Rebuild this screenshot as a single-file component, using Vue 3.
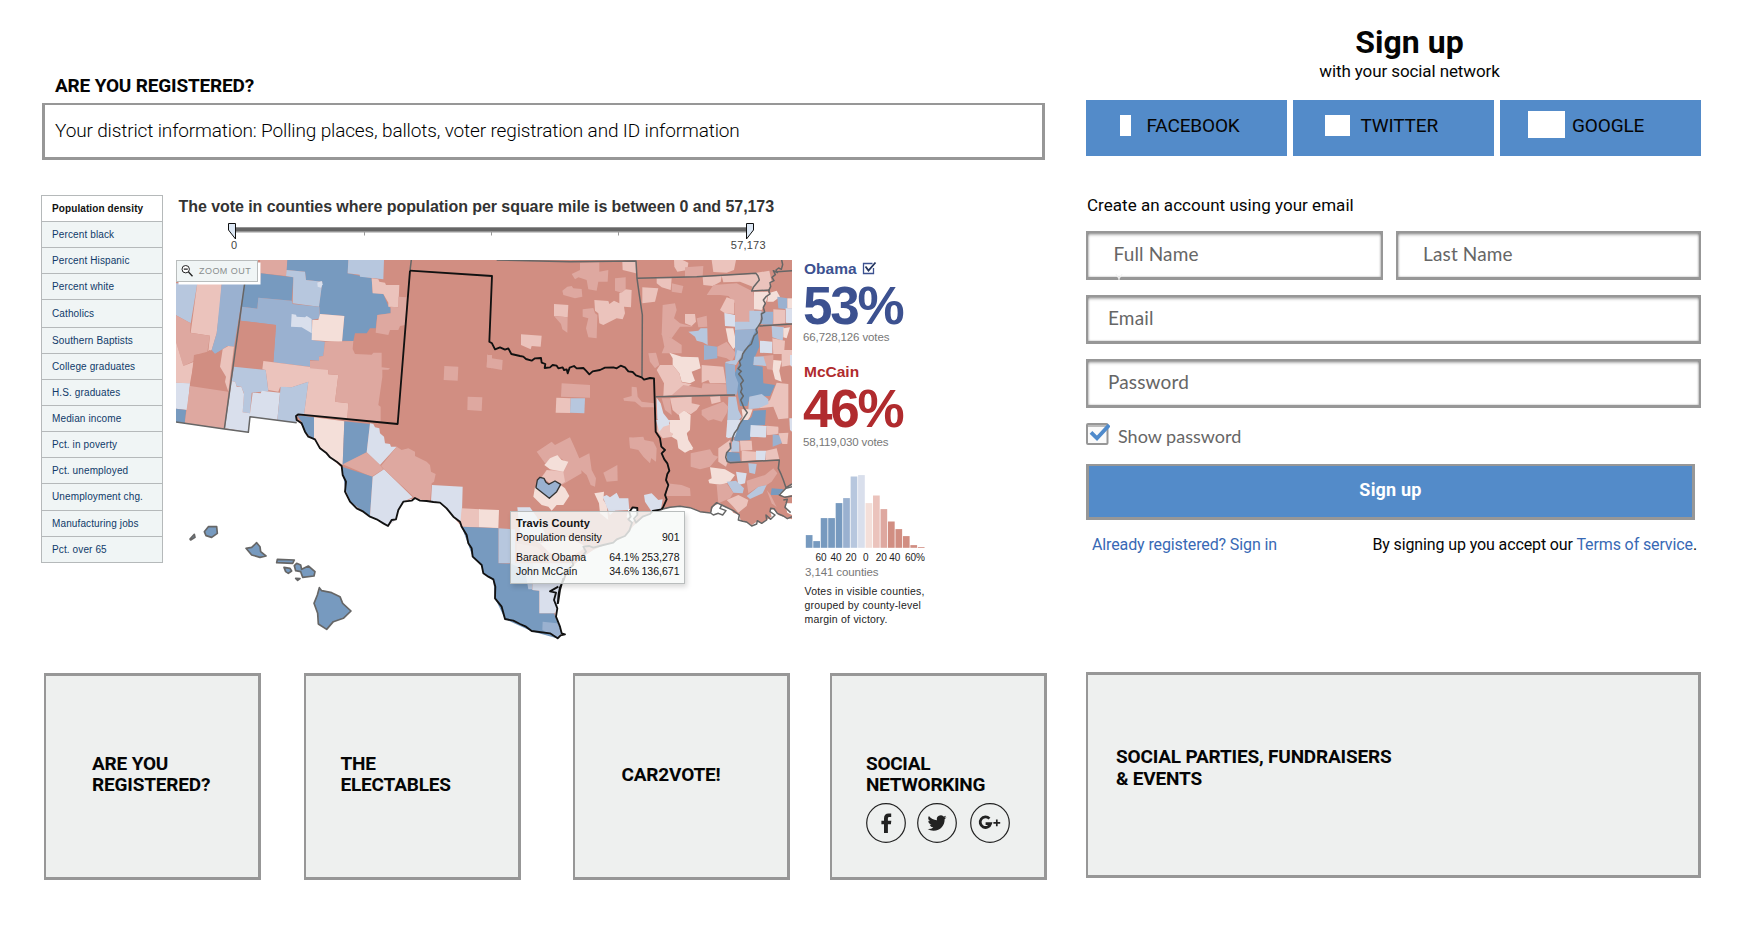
<script setup>
const menu = [
  'Population density', 'Percent black', 'Percent Hispanic', 'Percent white', 'Catholics',
  'Southern Baptists', 'College graduates', 'H.S. graduates', 'Median income', 'Pct. in poverty',
  'Pct. unemployed', 'Unemployment chg.', 'Manufacturing jobs', 'Pct. over 65',
]

// r1 (strong) to r4 (slight) lean McCain, b1 (strong) to b4 (slight) lean Obama
const bars = [
  [12.7, 'b1'], [6.7, 'b1'], [29.7, 'b1'], [29.7, 'b1'], [44.7, 'b1'], [49.7, 'b2'], [71.3, 'b3'], [72.7, 'b4'],
  [44.7, 'r4'], [52.3, 'r3'], [38.7, 'r2'], [26.3, 'r1'], [18.7, 'r1'], [11.7, 'r1'], [2.7, 'r1'], [0.8, 'r1'],
]
const axis = [
  [821, '60'], [836, '40'], [851, '20'], [865.8, '0'], [881.2, '20'], [894.8, '40'], [915, '60%'],
]

const west = [
  ['b3', '18,100 82,100 62,220 18,196'],
  ['r3', '82,100 155,100 150,170 140,250 125,300 115,303 120,257 62,248'],
  ['b2', '155,100 224,100 192,290 172,288 158,298 135,312 125,300 140,250'],
  ['r2', '18,196 62,220 60,248 120,257 112,305 75,315 72,333 40,348 18,275'],
  ['r3', '18,275 40,348 72,335 60,400 18,398'],
  ['r1', '72,315 112,310 118,300 135,312 158,298 150,350 168,390 172,425 62,410'],
  ['r3', '158,298 175,288 192,290 175,425 165,395 168,380 150,350'],
  ['b4', '18,398 60,400 52,480 18,476'],
  ['b1', '18,476 48,480 45,520 18,516'],
  ['r2', '60,408 175,425 163,537 44,520'],
  ['r2', '270,30 352,30 350,78 272,70'],
  ['b1', '352,30 535,30 533,70 605,85 608,128 640,132 655,168 662,175 662,190 622,195 617,235 600,235 590,250 555,250 550,273 516,272 523,198 450,192 447,165 457,95 408,90 405,65 350,60'],
  ['b3', '535,30 642,30 640,88 570,80 569,74 533,70'],
  ['b1', '272,70 370,82 365,152 265,143 262,176 215,170 224,100 270,100'],
  ['b3', '350,60 405,65 408,90 457,95 447,170 368,160 370,82 348,78'],
  ['b4', '442,98 455,93 458,103 453,113 443,110'],
  ['b2', '215,170 262,176 265,143 365,152 368,162 448,170 450,205 425,210 427,270 465,275 460,318 447,320 447,332 420,330 420,350 310,337 318,225 212,212'],
  ['b4', '365,192 378,194 380,200 405,202 410,198 425,207 425,250 395,232 363,230'],
  ['r4', '450,192 523,198 516,277 425,270 427,210 445,210'],
  ['r1', '212,212 318,225 310,337 280,333 277,358 192,348'],
  ['r3', '280,333 475,358 475,373 505,375 495,455 535,460 532,507 402,495 415,395 365,412 330,412 325,425 295,420 287,360 277,358'],
  ['r2', '465,275 550,273 548,297 555,312 605,314 610,308 635,308 635,352 660,355 655,359 637,359 637,380 625,465 632,470 632,515 532,507 535,460 495,455 505,375 475,373 475,360 420,355 420,332 447,332 447,320 460,318'],
  ['b3', '192,350 287,360 295,423 245,428 240,490 218,487 222,430 214,410 200,408 196,396 185,393'],
  ['b4', '185,393 196,396 200,410 214,410 222,432 218,487 240,490 248,428 272,430 275,422 330,428 322,510 240,500 235,547 165,535'],
  ['b3', '332,410 365,412 415,395 402,495 380,495 380,518 322,510'],
  ['r3', '605,85 625,88 628,95 645,98 648,105 688,105 685,172 655,170 655,158 640,132 608,130'],
  ['r2', '685,140 710,142 706,225 690,228 685,240 660,240 655,255 617,248 622,195 662,190 662,170 685,172'],
  ['b1', '380,495 432,502 432,570 405,545 395,515'],
  ['r4', '432,502 523,514 518,645 480,625 432,570'],
  ['b1', '523,514 600,522 590,607 518,645'],
  ['r2', '823,348 865,350 863,392 821,390'],
  ['r2', '893,440 937,442 935,483 892,480'],
  ['r2', '952,315 966,315 966,355 950,352'],
]

const south = [
  ['b4', '270,10 280,12 285,22 298,25 300,40 312,50 315,70 330,72 333,80 350,80 300,135 260,97'],
  ['r2', '188,133 260,97 300,135 310,148 275,170'],
  ['b1', '186,140 278,170 270,288 210,245 195,205'],
  ['b4', '278,170 312,148 398,232 370,245 355,270 348,298 324,318 270,288'],
  ['r2', '350,80 365,90 385,85 405,95 405,108 440,125 450,135 453,155 467,162 462,185 455,190 450,245 405,234 312,148 303,138'],
  ['b4', '456,195 548,200 545,312 520,290 480,248 453,243'],
  ['r3', '545,265 600,268 597,322 540,320'],
  ['r4', '597,268 657,270 655,324 597,322'],
  ['b3', '655,325 705,328 705,430 655,430'],
  ['b1', '545,320 655,325 655,430 730,432 757,510 778,512 778,580 822,580 845,640 830,655 755,634 675,597 645,535 640,478 610,460 605,435 578,410'],
  ['b3', '690,430 762,430 757,508 745,508 735,450'],
  ['b4', '760,430 880,430 858,470 842,505 834,556 824,580 778,580 778,512 757,510'],
  ['b2', '788,605 832,610 845,640 830,655 787,630'],
]

const plains = [
  ['r2', '300,38 358,37 358,65 385,60 383,95 355,95 350,122 325,118 320,90 295,82 285,88 275,72 300,60'],
  ['r2', '247,122 262,110 275,108 280,115 305,117 307,140 285,145 250,135'],
  ['r3', '222,162 265,165 263,202 222,198'],
  ['r2', '222,198 263,202 262,248 247,238 243,222'],
  ['r2', '308,178 340,174 345,190 352,195 350,265 325,262 318,235 325,205 308,200'],
  ['r3', '343,150 385,153 388,162 402,152 418,160 418,130 437,118 455,120 453,172 432,170 435,190 428,208 410,205 370,225 358,220 355,190 345,182'],
  ['r2', '405,85 437,82 437,118 425,128 405,122'],
  ['r3', '427,35 468,35 468,70 428,60'],
  ['r3', '123,253 185,257 182,290 155,288 152,298 123,285'],
  ['r2', '22,313 35,325 68,330 66,360 20,352'],
  ['r2', '245,400 330,405 330,443 243,440'],
  ['r3', '229,443 272,445 270,489 227,488'],
  ['b3', '272,445 315,445 313,490 270,488'],
  ['r2', '430,445 455,438 455,410 470,412 473,440 485,455 522,460 522,472 485,472 465,455 432,452'],
  ['r2', '448,563 490,560 495,575 520,580 522,590 510,640 490,620 475,600 450,595'],
  ['r3', '582,30 608,30 625,38 622,60 592,65 583,50'],
  ['r2', '615,52 670,48 668,78 615,82'],
  ['r3', '695,30 768,30 762,60 740,68 700,66'],
  ['r3', '487,112 535,115 525,155 487,160'],
  ['r3', '530,85 575,85 572,120 545,112 530,100'],
  ['r2', '575,100 610,108 605,130 575,125'],
  ['r3', '668,80 725,78 722,95 698,108 670,105'],
  ['r3', '725,77 828,71 838,88 818,110 780,95 730,97'],
  ['r3', '820,70 868,62 875,95 865,122 815,123'],
  ['r2', '700,105 770,100 820,125 825,165 822,185 808,215 785,218 765,215 765,160 745,138 720,135 680,135'],
  ['r2', '548,165 585,160 590,180 582,205 600,220 640,230 600,230 575,265 545,255'],
  ['r2', '545,250 575,265 605,285 605,310 545,310 553,290'],
  ['r3', '615,192 645,192 648,215 635,228 615,220'],
  ['r2', '650,205 680,197 682,230 655,232'],
  ['b3', '625,245 655,242 662,235 682,235 683,285 668,277 650,272 645,260'],
  ['b2', '672,285 712,290 712,325 672,330'],
  ['r2', '712,290 740,275 768,310 755,335 740,325 712,318'],
  ['r4', '737,235 760,235 770,285 760,298 745,275'],
  ['b4', '733,188 765,195 765,230 735,228'],
  ['r3', '720,180 740,142 763,150 763,192 735,190'],
  ['b3', '765,215 808,215 808,182 845,182 840,215 832,238 765,240'],
  ['b2', '765,240 832,236 815,270 800,300 780,330 765,335'],
  ['b3', '772,300 790,305 768,345 735,340 738,335 765,330'],
  ['b1', '832,230 838,290 825,320 820,345 848,350 850,400 885,405 870,438 810,440 802,468 780,468 768,400 762,375 785,322 810,275'],
  ['b2', '735,340 765,345 765,375 775,400 770,434 740,432'],
  ['b3', '745,440 768,440 775,480 785,500 765,525 742,515'],
  ['r4', '568,308 605,320 655,322 662,355 635,365 645,392 630,400 605,395 598,370 578,345 578,325'],
  ['r3', '540,345 578,345 598,370 605,397 635,403 605,420 580,435 550,438 552,400 530,360'],
  ['r2', '505,310 528,308 538,345 525,355 510,335'],
  ['r3', '665,345 730,350 738,400 690,400 685,390 665,398'],
  ['r2', '575,436 610,405 665,415 668,400 738,403 740,432'],
  ['r4', '822,125 865,125 860,150 845,180 822,178'],
  ['r4', '865,130 890,122 900,140 880,155 862,155'],
  ['b2', '892,140 922,145 922,178 895,175'],
  ['r4', '922,145 936,145 936,175 922,175'],
  ['b2', '845,185 880,185 878,225 840,222'],
  ['r3', '880,178 915,180 915,220 880,222'],
  ['b4', '917,175 936,175 936,220 917,218'],
  ['b3', '875,228 912,232 908,272 877,262'],
  ['r4', '910,235 930,232 920,265 910,262'],
  ['b4', '840,272 877,275 877,310 840,308'],
  ['r3', '877,265 915,272 912,312 880,312'],
  ['b3', '822,320 860,318 860,348 820,345'],
  ['r3', '905,300 936,300 936,345 905,350'],
  ['r2', '850,318 880,315 880,360 862,358'],
  ['r4', '880,330 905,332 898,362 905,395 885,388 878,360'],
  ['b4', '930,315 936,315 936,350 930,345'],
  ['r3', '890,398 925,402 925,505 895,508 880,470 835,475 870,450'],
  ['b3', '808,440 845,432 865,448 865,462 835,475 805,478'],
  ['b1', '820,482 858,480 855,525 812,530 808,570 762,572 765,540 795,520 815,500'],
  ['r4', '785,478 818,478 810,500 795,522 780,520 788,500'],
  ['b4', '812,528 858,530 857,562 810,560'],
  ['b4', '928,505 936,505 936,545 930,540'],
  ['r3', '860,527 895,530 895,550 865,555'],
  ['b4', '530,443 542,460 550,490 570,515 545,520 532,508'],
  ['r3', '532,520 550,512 575,525 577,560 548,565 532,545'],
  ['r4', '595,485 615,482 632,495 630,540 620,550 625,575 638,600 610,600 600,575 575,560 580,545 597,540 600,510'],
  ['r3', '570,445 635,440 635,460 660,465 650,480 632,493 612,482 595,495 578,480'],
  ['r2', '545,445 570,445 575,495 555,480'],
  ['r2', '665,480 690,470 730,455 745,470 740,490 725,515 700,508 685,512 665,495'],
  ['r3', '690,440 720,438 722,455 695,462'],
  ['b4', '742,510 770,515 765,545 750,562 738,562'],
]

const gulf = [
  ['b4', '468,0 510,0 507,15 490,20 478,35'],
  ['r4', '510,0 555,0 555,20 565,60 580,85 555,98 535,85 530,50 510,35'],
  ['r2', '572,100 630,88 640,105 655,110 630,140 600,148 572,140'],
  ['r3', '655,85 690,60 695,95 678,140 655,125'],
  ['r4', '630,142 675,148 705,165 690,185 665,195 628,190 625,180 635,175'],
  ['b4', '685,0 722,0 705,50 682,55'],
  ['b3', '697,60 718,65 718,95 693,95'],
  ['b1', '727,0 765,0 750,60 706,62 715,25'],
  ['b1', '680,95 718,98 722,125 682,125'],
  ['b4', '752,15 800,18 798,52 750,50'],
  ['b2', '818,43 850,48 845,70 818,80'],
  ['r3', '800,20 835,25 833,42 800,45'],
  ['r3', '720,62 755,62 757,90 722,92'],
  ['r3', '835,40 865,38 862,72 847,72'],
  ['b4', '768,92 798,92 796,120 768,120'],
  ['r3', '725,92 768,95 768,120 725,124'],
  ['r3', '798,92 830,85 838,118 798,120'],
  ['b3', '745,130 770,132 765,162 748,158'],
  ['b4', '708,155 740,160 735,190 715,195'],
  ['b3', '680,185 708,182 732,205 728,220 700,218'],
  ['r2', '740,182 795,165 820,145 832,160 815,185 800,195 775,200 745,220'],
  ['b3', '740,228 775,200 800,195 788,220 750,237'],
  ['b1', '815,205 850,208 845,225 812,225'],
  ['r2', '800,210 812,225 830,262 815,250'],
  ['r2', '650,195 680,190 700,218 690,235 655,250'],
  ['r3', '680,240 715,225 745,240 740,258 715,278 700,260'],
  ['r2', '500,190 545,195 570,205 572,228 500,228'],
  ['r2', '388,52 460,65 470,85 468,125 450,112 430,105 425,90 390,82'],
  ['r2', '310,158 352,135 353,182 320,185'],
  ['r2', '228,120 268,100 275,150 288,175 285,200 272,195 260,165 240,148'],
  ['r2', '110,95 155,65 165,75 210,52 225,85 240,120 245,160 185,195 150,150 202,130 170,105 135,130'],
  ['r3', '125,172 140,150 190,155 195,185 180,195 150,190'],
  ['r4', '133,135 150,115 172,105 185,120 205,125 190,155 150,148'],
  ['r4', '105,200 148,235 182,195 195,205 208,228 190,255 170,255 155,272 145,260 125,255 100,230'],
  ['r4', '283,220 312,215 310,240 320,255 325,300 300,280 297,250'],
  ['b4', '308,230 320,225 330,232 350,218 358,235 385,235 388,270 345,272 330,285 318,255'],
  ['b4', '432,225 455,220 475,240 488,238 483,268 455,275 435,245'],
  ['b4', '52,262 90,262 110,290 135,340 120,370 60,340'],
  ['r2', '50,370 110,380 130,400 50,430'],
  ['r4', '120,370 200,350 260,380 200,420 150,400'],
]

const islands = [
  '118,503 125,512 155,518 180,530 188,550 213,573 190,595 160,605 140,628 115,612 113,580 102,550 112,525',
  '50,430 62,435 65,448 85,438 105,455 102,468 68,472 62,455 47,452 43,437',
  '12,442 30,445 35,453 25,460 17,455',
  '47,475 60,476 53,481',
  '-8,418 43,420 38,430 -10,428',
  '-102,385 -85,382 -70,368 -60,380 -58,395 -42,408 -60,412 -85,405',
  '-227,335 -215,320 -190,320 -188,340 -205,352 -222,347',
  '-270,357 -257,343 -255,352 -268,360',
]

const land =
  'M18,30 H1866 V808 L1840,800 1825,795 1810,778 1800,780 1805,800 1790,810 1775,820 1760,815 1745,826 1730,818 1712,812 1708,795 1690,788 1680,775 1665,772 1650,760 1630,768 1622,788 1590,785 1560,772 1530,768 1500,772 1475,778 1450,785 1420,802 1390,828 1370,855 1340,872 1310,882 1270,900 1240,920 1205,950 1180,985 1165,1025 1162,1062 1152,1045 1158,1110 1175,1153 1162,1165 1140,1150 1085,1143 1050,1122 1005,1107 995,1070 975,1045 970,988 940,970 935,945 908,920 895,880 875,830 850,800 810,758 770,753 735,744 700,755 685,780 678,808 654,828 620,808 580,785 540,755 525,715 518,655 480,622 450,595 430,565 410,555 395,525 380,510 380,518 240,500 235,547 163,537 18,516 Z'

const rioGrande =
  'M720,62 L966,78 958,275 966,280 975,298 990,292 1005,299 1015,295 1024,312 1050,318 1060,320 1068,327 1085,332 1095,325 1113,324 1115,338 1126,342 1124,354 1140,352 1148,345 1160,347 1165,355 1178,352 1182,360 1190,358 1193,370 1199,353 1212,348 1220,355 1240,354 1248,362 1258,373 1268,364 1290,360 1305,353 1330,352 1340,355 1352,347 1365,352 1375,364 1388,366 1398,376 1415,382 1422,389 1440,384 1452,385 1457,545 1470,565 1474,590 1485,600 1475,610 1483,628 1492,640 1498,662 1492,672 1488,690 1495,705 1485,735 1490,748 1480,770 1475,778'
const coast =
  'M1475,778 L1448,783 1440,792 1418,800 1398,818 1392,806 1402,795 1402,774 1388,772 1378,786 1382,800 1375,808 1386,818 1378,842 1365,858 1340,868 1330,878 1300,885 1270,893 1258,888 1240,890 1248,905 1236,920 1205,930 1210,945 1190,962 1182,988 1170,1012 1166,1030 1163,1062 M1180,985 L1170,1020 1164,1060 M1165,1010 L1140,1024 1158,1028 1152,1050 1162,1075 1158,1100 1170,1130 1175,1150 1185,1153 1172,1156 1163,1165 1140,1150 1085,1143 1068,1130 1050,1122 1030,1112 1005,1107 995,1070 975,1045 976,1010 970,988 955,980 940,970 935,945 908,920 905,895 895,880 890,855 875,830 870,815 850,800 830,775 810,758 790,756 770,753 750,752 735,744 725,752 700,755 685,780 678,808 665,810 654,828 640,820 620,808 600,800 580,785 560,775 540,755 525,725 528,695 518,675 515,648 500,635 480,622 470,610 450,595 435,568 415,560 405,545 395,520 380,510 378,498 385,493 683,522 720,62'
</script>

<template>
  <div class="page">
    <main class="left">
      <h2 class="lead">ARE YOU REGISTERED?</h2>
      <div class="district"><span>Your district information: Polling places, ballots, voter registration and ID information</span></div>

      <section class="viz">
        <ul class="menu">
          <li v-for="(m, i) in menu" :key="m" :class="['item', 'm' + i]"><span>{{ m }}</span></li>
        </ul>

        <div class="center">
          <h3 class="viz-title">The vote in counties where population per square mile is between 0 and 57,173</h3>
          <svg class="slider" viewBox="176 219 616 41">
            <rect x="234" y="227.3" width="514" height="4.4" fill="#666" />
            <path d="M236,232H747" stroke="#999" />
            <path d="M364.5,232v3.5M491.5,232v3.5M618.5,232v3.5" stroke="#999" />
            <path d="M228.5,223.5h7v15.5l-7,-9z" fill="#dde8f5" stroke="#111" />
            <path d="M753.5,223.5h-7v15.5l7,-9z" fill="#dde8f5" stroke="#111" />
            <text x="234" y="249" text-anchor="middle">0</text>
            <text x="748.3" y="249" text-anchor="middle" class="max">57,173</text>
          </svg>
          <div class="map-wrap">
            <svg class="map" viewBox="18 30 1848 1155">
              <path :d="land" class="r1" />
              <g><polygon v-for="(p, i) in west" :key="i" :class="p[0]" :points="p[1]" /></g>
              <g transform="translate(330 510)"><polygon v-for="(p, i) in south" :key="i" :class="p[0]" :points="p[1]" /></g>
              <g transform="translate(930 0)"><polygon v-for="(p, i) in plains" :key="i" :class="p[0]" :points="p[1]" /></g>
              <g transform="translate(990 510)"><polygon v-for="(p, i) in gulf" :key="i" :class="p[0]" :points="p[1]" /></g>
              <g transform="translate(990 510)" class="water">
                <polygon points="385,268 410,262 412,290 395,308 380,290" />
                <polygon points="640,262 665,255 678,270 660,285 642,278" />
                <polygon points="858,205 876,195 876,225 850,230 838,222" />
                <polygon points="855,250 876,250 876,285 862,278" />
              </g>
              <g class="state">
                <path d="M224,100 L163,537 M18,516 L163,537 235,547 240,500 380,518 M724,30 L720,62" />
                <g transform="translate(930 0)">
                  <path d="M50,30 L270,35 468,33 471,85 478,135 487,195 486,380 M471,85 L650,80 828,70 834,78 838,90 828,102 820,112 815,123 870,120 M890,65 L936,62 M838,228 L936,222 M527,440 L765,435" />
                  <path d="M905,30 l3,14 -4,14 -8,-4 -8,6 4,8 -12,-6 6,12 -10,8 6,10 -12,6 2,12 -6,12 4,10 -12,8 -8,10 6,10 -6,12 4,14 -10,6 2,14 -4,12 -8,12 -6,8 4,10 -10,10 -4,12 -4,12 -10,8 -8,10 -8,12 -2,12 -8,10 4,12 -8,10 10,8 -8,8 8,10 6,10 -8,10 4,14 -4,10 8,12 -8,12 6,14 4,10 10,14 -8,12 -8,12 -8,12 -6,14 -8,10 -6,14 -2,12" />
                </g>
                <g transform="translate(990 510)">
                  <path d="M690,68 L692,85 680,98 677,112 682,125 690,128 838,120 835,145 842,160 850,180 858,203 876,192" />
                  <path d="M485,268 L510,262 540,259 570,263 600,275 632,279 635,262 650,248 665,255 660,265 678,272 668,285 655,280 640,285 632,279 M665,255 L700,272 718,285 715,300 728,304 740,306 755,318 770,312 772,302 785,310 800,300 798,285 812,298 825,285 810,275 812,265 822,266 832,280 850,288 862,296 876,290 M876,200 L858,205 838,225 855,232 876,228 M850,240 L862,238 855,262 872,278" />
                </g>
              </g>
              <path :d="rioGrande" class="texas" />
              <path :d="coast" class="texas" />
              <g transform="translate(330 510)" class="island"><polygon v-for="p in islands" :key="p" :points="p" /></g>
              <polygon class="travis" transform="translate(990 510)" points="112,180 120,172 132,175 138,187 146,193 165,183 182,193 170,215 148,235 108,203" />
            </svg>

            <div class="zoom-out">
              <svg width="12" height="12" viewBox="0 0 12 12"><circle cx="4.7" cy="4.2" r="3.7" fill="#fff" stroke="#222" /><path d="M2.8,4.2h4M7.5,7l4,4.2" stroke="#222" stroke-width="1.3" fill="none" /></svg>
              <span>ZOOM OUT</span>
            </div>

            <div class="tip">
              <strong>Travis County</strong>
              <div class="tip-row"><span>Population density</span><span>901</span></div>
              <div class="tip-row cand"><span>Barack Obama</span><span class="pct">64.1%</span><span class="cnt">253,278</span></div>
              <div class="tip-row"><span>John McCain</span><span class="pct">34.6%</span><span class="cnt">136,671</span></div>
            </div>
          </div>
        </div>

        <aside class="stats">
          <div class="name obama">Obama
            <svg width="15" height="14" viewBox="0 0 15 14"><path d="M10.5,2.5H1.5v10h10V7" fill="#fff" stroke="#3c5190" stroke-width="1.3" /><path d="M3.5,5.5l3,4L13.5,1.5" fill="none" stroke="#24355f" stroke-width="1.8" /></svg>
          </div>
          <div class="big obama">53%</div>
          <div class="votes">66,728,126 votes</div>
          <div class="name mccain">McCain</div>
          <div class="big mccain">46%</div>
          <div class="votes v2">58,119,030 votes</div>
          <svg class="histo" viewBox="803 475 124 90">
            <rect v-for="(b, i) in bars" :key="i" :class="b[1]" :x="805.8 + i * 7.47" :y="547.8 - b[0]" width="6.7" :height="b[0]" />
            <text v-for="a in axis" :key="a[0]" :x="a[0]" y="561" text-anchor="middle">{{ a[1] }}</text>
          </svg>
          <div class="counties">3,141 counties</div>
          <p class="note">Votes in visible counties,<br />grouped by county-level<br />margin of victory.</p>
        </aside>
      </section>

      <section class="cards">
        <div class="card c1">ARE YOU<br />REGISTERED?</div>
        <div class="card c2">THE<br />ELECTABLES</div>
        <div class="card c3">CAR2VOTE!</div>
        <div class="card c4">
          <div>SOCIAL<br />NETWORKING</div>
          <div class="icons">
            <svg viewBox="0 0 40 40"><circle cx="20" cy="20" r="19.3" /><path class="ink" d="M18,30V21.2h-2.6v-3.4H18v-2.3c0,-3.2 1.7,-5 4.6,-5h2.6v3.6h-1.7c-1.3,0 -1.6,.6 -1.6,1.7v2h3.4l-.4,3.4h-3V30z" /></svg>
            <svg viewBox="0 0 40 40"><circle cx="20" cy="20" r="19.3" /><path class="ink" transform="translate(10.6 10.6) scale(.79)" d="M23.95 4.57a10 10 0 0 1-2.82.77 4.96 4.96 0 0 0 2.16-2.72 9.9 9.9 0 0 1-3.12 1.19 4.92 4.92 0 0 0-8.38 4.48A13.93 13.93 0 0 1 1.64 3.16a4.92 4.92 0 0 0 1.52 6.57 4.9 4.9 0 0 1-2.23-.61v.06a4.92 4.92 0 0 0 3.95 4.83 5 5 0 0 1-2.21.08 4.94 4.94 0 0 0 4.6 3.42A9.87 9.87 0 0 1 0 19.54a13.99 13.99 0 0 0 7.55 2.21c9.05 0 14-7.5 14-13.98 0-.21 0-.42-.02-.63a9.94 9.94 0 0 0 2.46-2.55z" /></svg>
            <svg viewBox="0 0 40 40"><circle cx="20" cy="20" r="19.3" /><path class="line" d="M19.4,15.6A5.3,5.3 0 1 0 20.6,20.6H15.6" /><path class="thin" d="M23.4,19.9h6.8M26.8,16.5v6.8" /></svg>
          </div>
        </div>
      </section>
    </main>

    <aside class="right">
      <h1>Sign up</h1>
      <p class="sub">with your social network</p>
      <div class="socials">
        <button class="soc"><i class="fb"></i><span>FACEBOOK</span></button>
        <button class="soc"><i class="tw"></i><span>TWITTER</span></button>
        <button class="soc"><i class="gg"></i><span>GOOGLE</span></button>
      </div>
      <p class="create">Create an account using your email</p>
      <div class="names">
        <div class="field full"><span>Full Name</span>
          <svg class="notch" width="8" height="6" viewBox="0 0 8 6"><path d="M.8,0 4,4.5 7.2,0M4,4.5V6" fill="none" stroke="#f4f4f4" stroke-width="1.1" /></svg>
        </div>
        <div class="field last"><span>Last Name</span></div>
      </div>
      <div class="field"><span>Email</span></div>
      <div class="field"><span>Password</span></div>
      <div class="show">
        <svg width="24" height="22" viewBox="0 0 24 22">
          <rect x="1" y="1" width="20.5" height="20" rx="1" fill="#fafafa" stroke="#979797" stroke-width="2" />
          <path d="M2,3H21" stroke="#bbb" stroke-width="2" />
          <path d="M5,9.3l6,6L23.2,2" fill="none" stroke="#4f8acb" stroke-width="3.8" />
        </svg>
        <span>Show password</span>
      </div>
      <button class="submit">Sign up</button>
      <div class="links">
        <a class="signin">Already registered? Sign in</a>
        <span class="terms">By signing up you accept our <a>Terms of service</a>.</span>
      </div>
      <div class="events">SOCIAL PARTIES, FUNDRAISERS<br />&amp; EVENTS</div>
    </aside>
  </div>
</template>

<style>
body {
  margin: 0;
  background: #fff;
  overflow: hidden;
}
</style>

<style scoped>
.page {
  display: flex;
  width: 1755px;
  height: 939px;
  box-sizing: border-box;
  padding-left: 42px;
  font-family: Roboto, sans-serif;
  color: #050505;
}
.page * {
  box-sizing: border-box;
}
h1, h2, h3, p, ul {
  margin: 0;
  padding: 0;
}
button {
  border: 0;
  padding: 0;
  font-family: inherit;
}
.left {
  width: 1005px;
  padding-top: 73px;
}
.right {
  width: 615px;
  margin-left: 39px;
  padding-top: 24px;
}
.lead {
  padding-left: 13px;
  font-size: 19px;
  line-height: 25px;
  font-weight: 700;
  letter-spacing: -0.18px;
  white-space: nowrap;
}
.district {
  width: 1003px;
  height: 57px;
  margin-top: 5px;
  padding-left: 10px;
  border: 3px solid #979797;
  border-top-width: 2px;
  font-size: 19px;
  line-height: 52px;
  font-weight: 300;
  letter-spacing: -0.14px;
  color: #000;
  white-space: nowrap;
}
.viz {
  display: flex;
  height: 450px;
  margin-top: 35px;
  font-family: 'Liberation Sans', Arial, sans-serif;
}
.menu {
  width: 122px;
  margin-left: -1px;
  list-style: none;
}
.item {
  height: 26.05px;
  padding-left: 10px;
  border: 1px solid #b5b9ba;
  border-bottom-width: 0;
  background: #f0f5f5;
  color: #0f3a69;
  font-size: 10px;
  line-height: 25px;
  letter-spacing: 0.12px;
  white-space: nowrap;
}
.item.m0 {
  background: #fff;
  color: #111;
  font-weight: 700;
  letter-spacing: 0.1px;
}
.item.m4 {
  height: 28px;
  line-height: 27px;
}
.item.m13 {
  height: 27.5px;
  border-bottom-width: 1px;
}
.center {
  width: 616px;
  margin-left: 13px;
}
.viz-title {
  height: 24px;
  padding-left: 2.5px;
  font-size: 16px;
  line-height: 23px;
  letter-spacing: -0.06px;
  color: #333;
  white-space: nowrap;
}
.slider {
  display: block;
  width: 616px;
  height: 41px;
}
.slider text {
  font-size: 11px;
  fill: #444;
}
.slider .max {
  letter-spacing: 0.2px;
}
.map-wrap {
  position: relative;
  width: 616px;
  height: 385px;
}
.map {
  display: block;
  width: 616px;
  height: 385px;
}
.r1 { fill: #d18e82; }
.r2 { fill: #dea8a0; }
.r3 { fill: #ebc3bc; }
.r4 { fill: #f4dfd9; }
.b1 { fill: #779abf; }
.b2 { fill: #9ab1d0; }
.b3 { fill: #b7c7de; }
.b4 { fill: #d9dfec; }
.water { fill: #fff; }
.state {
  fill: none;
  stroke: #666;
  stroke-width: 4.5;
  stroke-linejoin: round;
}
.texas {
  fill: none;
  stroke: #111;
  stroke-width: 5.5;
  stroke-linejoin: round;
}
.island {
  fill: #779abf;
  stroke: #666;
  stroke-width: 5;
  stroke-linejoin: round;
}
.travis {
  fill: #9ab1d0;
  stroke: #333;
  stroke-width: 4;
  stroke-linejoin: round;
}
.zoom-out {
  position: absolute;
  left: 0;
  top: 0;
  display: flex;
  align-items: center;
  width: 82px;
  height: 22px;
  padding-left: 4px;
  background: #f0f5f5;
  border: 1px solid #b9bdbd;
  box-shadow: 2.5px 2.5px 0 #fff;
  font-size: 9px;
  color: #8a8e8e;
}
.zoom-out span {
  margin-left: 6px;
  letter-spacing: 0.45px;
  white-space: nowrap;
}
.tip {
  position: absolute;
  left: 334px;
  top: 251px;
  width: 175px;
  height: 73px;
  padding: 4px 4.5px 0 5px;
  background: rgba(247, 249, 248, 0.84);
  border: 1px solid #b9bdbd;
  box-shadow: 2px 3px 5px rgba(0, 0, 0, 0.15);
  font-size: 10.5px;
  line-height: 14px;
  color: #111;
  white-space: nowrap;
}
.tip strong {
  display: block;
  font-size: 11px;
  letter-spacing: 0.1px;
}
.tip-row {
  display: flex;
  justify-content: space-between;
}
.cand {
  margin-top: 6px;
}
.pct {
  margin-left: auto;
}
.cnt {
  width: 40.5px;
  text-align: right;
}
.stats {
  width: 130px;
  margin-left: 11px;
  padding-top: 65px;
  white-space: nowrap;
}
.name {
  display: flex;
  align-items: center;
  height: 17px;
  padding-left: 1px;
  font-size: 15.5px;
  line-height: 16px;
  font-weight: 700;
}
.name svg {
  margin-left: 5px;
  margin-top: -1px;
}
.obama {
  color: #3c5190;
}
.mccain {
  color: #b02b2e;
}
.name.mccain {
  margin-top: 20px;
}
.big {
  margin-top: 4px;
  font-size: 53px;
  line-height: 50px;
  font-weight: 700;
  letter-spacing: -2.2px;
}
.votes,
.counties {
  font-size: 11.5px;
  line-height: 12px;
  color: #777;
}
.votes {
  letter-spacing: -0.12px;
}
.v2 {
  margin-top: 2px;
}
.histo {
  display: block;
  width: 124px;
  height: 90px;
  margin-top: 27px;
}
.histo text {
  font-size: 10px;
  fill: #222;
}
.counties {
  padding-left: 2px;
  line-height: 14px;
  letter-spacing: -0.1px;
}
.note {
  margin-top: 6px;
  padding-left: 1.5px;
  font-size: 10.5px;
  line-height: 13.8px;
  letter-spacing: 0.22px;
  color: #222;
}
.cards {
  display: flex;
  margin-top: 28px;
  padding-left: 2px;
}
.card,
.events {
  border: 3px solid #979797;
  border-left-width: 2px;
  background: #eef0ef;
  font-size: 19px;
  line-height: 21px;
  font-weight: 700;
  letter-spacing: -0.18px;
  white-space: nowrap;
}
.card {
  width: 217px;
  height: 207px;
  flex: none;
}
.c1 {
  padding: 77px 0 0 46px;
}
.c2 {
  margin-left: 43px;
  padding: 77px 0 0 34.5px;
}
.c3 {
  margin-left: 52px;
  padding: 88px 0 0 46.5px;
}
.c4 {
  margin-left: 40px;
  padding: 77px 0 0 34px;
  letter-spacing: -0.3px;
}
.icons {
  display: flex;
  margin-top: 8px;
}
.icons svg {
  width: 40px;
  height: 40px;
  margin-right: 11px;
}
.icons svg + svg + svg {
  margin-left: 2px;
}
.icons circle {
  fill: none;
  stroke: #222;
  stroke-width: 1.2;
}
.ink {
  fill: #222;
}
.line {
  fill: none;
  stroke: #222;
  stroke-width: 2.8;
}
.thin {
  fill: none;
  stroke: #222;
  stroke-width: 1.7;
}
h1 {
  padding-left: 32px;
  font-size: 32px;
  line-height: 36px;
  font-weight: 700;
  text-align: center;
}
.sub {
  margin-top: 1px;
  padding-left: 32px;
  font-size: 17px;
  line-height: 20px;
  font-weight: 400;
  letter-spacing: -0.1px;
  text-align: center;
}
.socials {
  display: flex;
  gap: 6px;
  margin-top: 19px;
}
.soc {
  display: flex;
  width: 201px;
  height: 56px;
  background: #538bc9;
  font-size: 19px;
  line-height: 52px;
  letter-spacing: -0.15px;
  color: #050505;
  white-space: nowrap;
}
.soc i {
  flex: none;
  background: #fff;
}
.fb {
  width: 11px;
  height: 21px;
  margin: 15px 15.5px 0 34px;
}
.tw {
  width: 25px;
  height: 21px;
  margin: 15px 10.5px 0 32px;
}
.gg {
  width: 37px;
  height: 27px;
  margin: 11px 7px 0 28px;
}
.create {
  margin-top: 39px;
  padding-left: 1px;
  font-size: 17px;
  line-height: 20px;
  letter-spacing: 0.03px;
}
.names {
  display: flex;
  gap: 13px;
  margin-top: 16px;
}
.field {
  position: relative;
  height: 49px;
  margin-bottom: 15px;
  padding-left: 20px;
  border: 2px solid #979797;
  border-bottom-width: 3px;
  background: #fff;
  box-shadow: inset 0 3px 3px -1px rgba(0, 0, 0, 0.3), inset 1px 0 2px rgba(0, 0, 0, 0.2), inset -1px 0 2px rgba(0, 0, 0, 0.2);
  font-family: Lato, sans-serif;
  font-size: 19px;
  line-height: 42px;
  letter-spacing: 0.15px;
  color: #666;
  white-space: nowrap;
}
.full {
  width: 297px;
  padding-left: 25.5px;
}
.last {
  width: 305px;
  padding-left: 25px;
}
.notch {
  position: absolute;
  left: 27px;
  bottom: -3px;
}
.show {
  display: flex;
  height: 22px;
  margin-top: 1px;
  font-family: Lato, sans-serif;
  font-size: 18px;
  line-height: 26px;
  color: #666;
}
.show span {
  margin-left: 8px;
}
.submit {
  display: block;
  width: 609px;
  height: 56px;
  margin-top: 19px;
  padding-bottom: 3px;
  border: 3px solid #979797;
  border-top-width: 2px;
  background: #538bc9;
  font-size: 18px;
  font-weight: 700;
  letter-spacing: 0.2px;
  line-height: 48px;
  color: #fff;
}
.links {
  display: flex;
  justify-content: space-between;
  margin-top: 14px;
  padding: 0 4px 0 6px;
  font-size: 16px;
  line-height: 21px;
}
.links a {
  color: #3869b5;
}
.signin,
.terms {
  letter-spacing: -0.12px;
}
.events {
  width: 615px;
  height: 206px;
  margin-top: 117px;
  padding: 71px 0 0 28px;
  line-height: 21.5px;
}
</style>
